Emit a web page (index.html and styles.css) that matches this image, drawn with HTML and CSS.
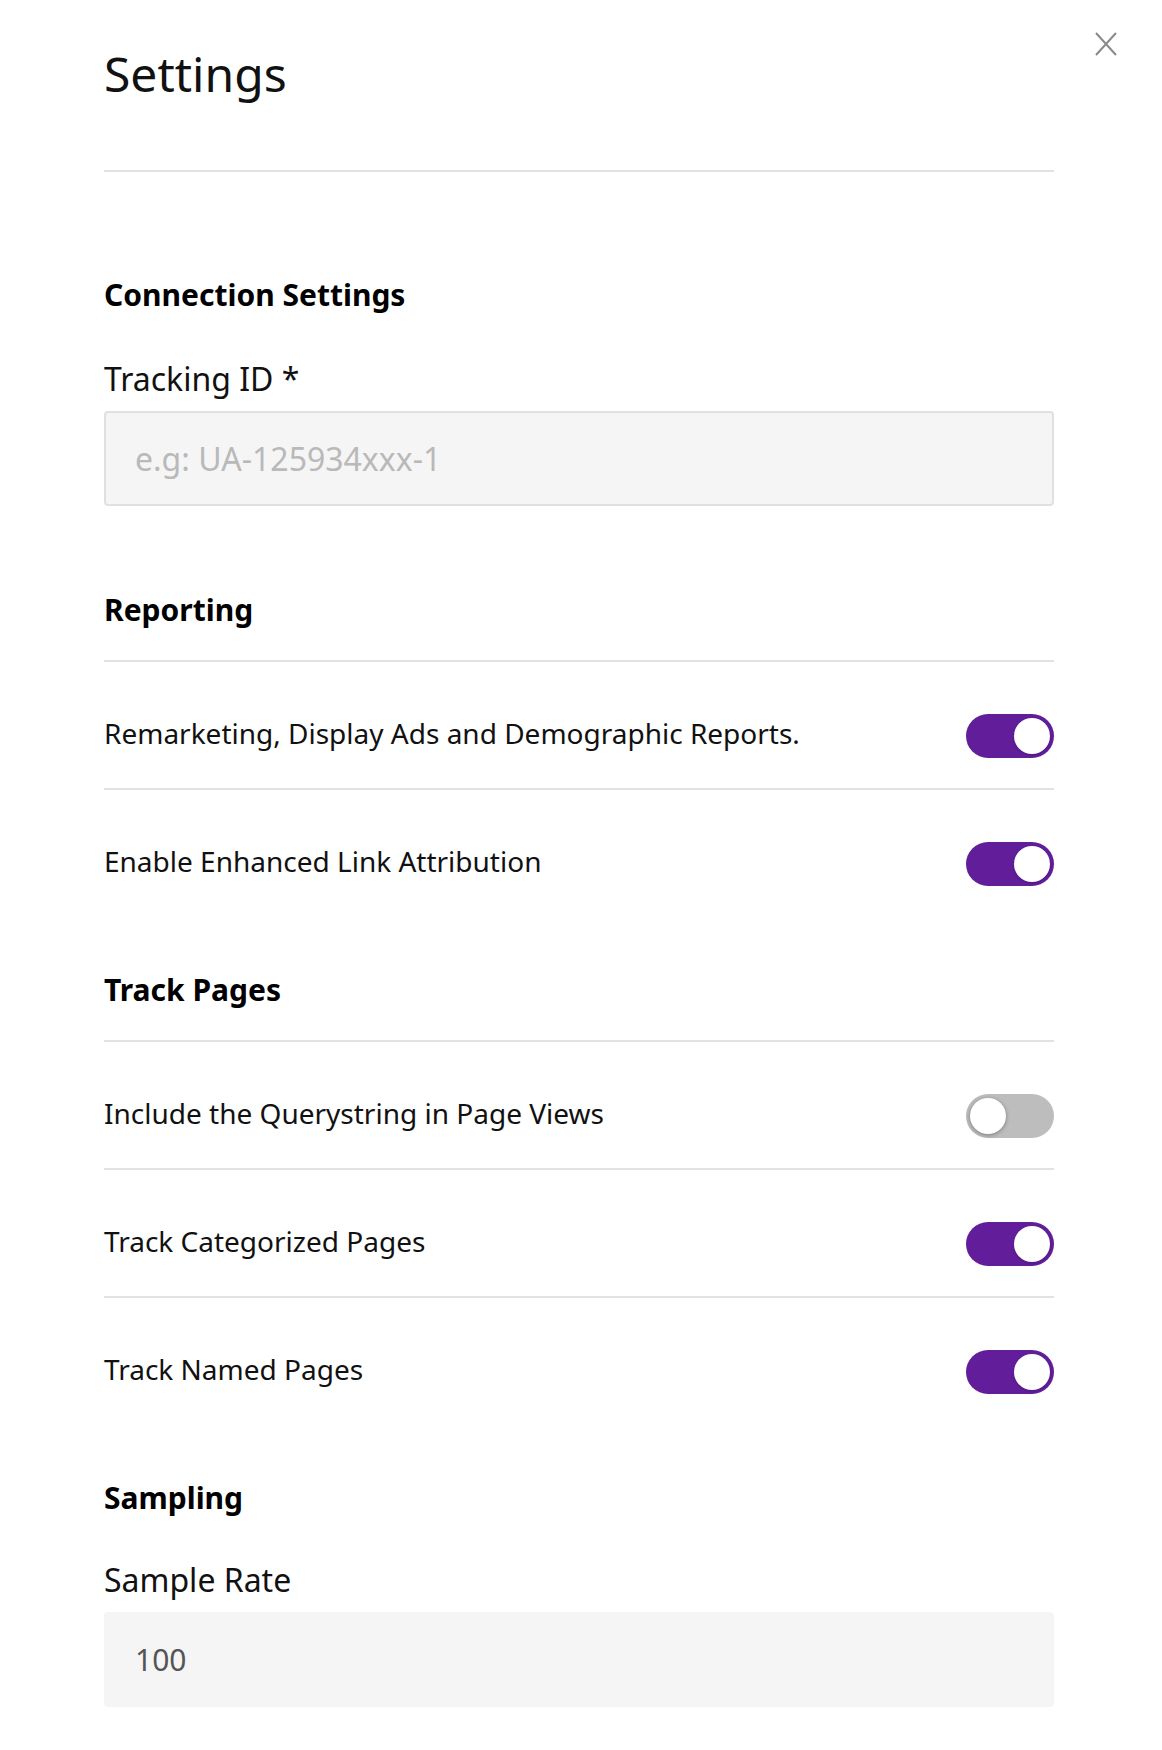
FILE: index.html
```html
<!DOCTYPE html>
<html lang="en">
<head>
<meta charset="utf-8">
<title>Settings</title>
<link rel="stylesheet" href="styles.css">
</head>
<body>
<div class="panel">
  <button class="close" aria-label="Close">
    <svg width="24" height="24" viewBox="0 0 24 24"><path d="M2 1 L22 23 M22 1 L2 23" stroke="#8a8a8a" stroke-width="2" fill="none"/></svg>
  </button>
  <header class="header">
    <h1 class="title">Settings</h1>
  </header>

  <section class="section section-first">
    <h2 class="section-title">Connection Settings</h2>
    <label class="field-label first-label" for="tid">Tracking ID *</label>
    <input class="text-input bordered" id="tid" type="text" placeholder="e.g: UA-125934xxx-1">
  </section>

  <section class="section section-after-field">
    <h2 class="section-title with-rule">Reporting</h2>
    <div class="row">
      <span class="row-text">Remarketing, Display Ads and Demographic Reports.</span>
      <span class="toggle on"><span class="knob"></span></span>
    </div>
    <div class="row">
      <span class="row-text">Enable Enhanced Link Attribution</span>
      <span class="toggle on"><span class="knob"></span></span>
    </div>
  </section>

  <section class="section">
    <h2 class="section-title with-rule">Track Pages</h2>
    <div class="row">
      <span class="row-text">Include the Querystring in Page Views</span>
      <span class="toggle"><span class="knob"></span></span>
    </div>
    <div class="row">
      <span class="row-text">Track Categorized Pages</span>
      <span class="toggle on"><span class="knob"></span></span>
    </div>
    <div class="row">
      <span class="row-text">Track Named Pages</span>
      <span class="toggle on"><span class="knob"></span></span>
    </div>
  </section>

  <section class="section">
    <h2 class="section-title">Sampling</h2>
    <label class="field-label" for="rate">Sample Rate</label>
    <input class="text-input plain" id="rate" type="text" value="100">
  </section>
</div>
</body>
</html>
```

FILE: styles.css
```css
* { box-sizing: border-box; }
html, body { margin: 0; padding: 0; background: #fff; }
body {
  font-family: "Noto Sans", "Open Sans", sans-serif;
  color: #111;
}
.panel {
  position: relative;
  width: 1162px;
  padding: 0 108px 40px 104px;
}
.close {
  position: absolute;
  top: 32px;
  right: 44px;
  width: 24px;
  height: 24px;
  padding: 0;
  border: 0;
  background: none;
  cursor: pointer;
}
.close svg { display: block; }
.header {
  padding: 42px 0 64px;
  border-bottom: 2px solid #e2e2e2;
}
.title {
  margin: 0;
  font-size: 48px;
  line-height: 64px;
  font-weight: 400;
  color: #111;
}
.section { margin-top: 54px; }
.section-first { margin-top: 103px; }
.section-after-field { margin-top: 84px; }
.section-title {
  margin: 0 0 42px;
  font-size: 30px;
  line-height: 40px;
  font-weight: 700;
  color: #000;
}
.section-title.with-rule { margin-bottom: 30px; }
.field-label {
  display: block;
  font-size: 32px;
  line-height: 40px;
  color: #111;
  margin-bottom: 14px;
}
.first-label {
  padding-top: 2px;
  margin-bottom: 12px;
}
.text-input {
  display: block;
  width: 100%;
  height: 95px;
  padding: 0 29px;
  font-family: "Noto Sans", "Open Sans", sans-serif;
  font-size: 32px;
  color: #555;
  background: #f5f5f5;
  border-radius: 4px;
  outline: none;
}
.text-input::placeholder { color: #b9b9b9; }
.bordered { border: 2px solid #e0e0e0; }
.plain {
  border: 0;
  padding-left: 31px;
  margin-top: -2px;
  font-size: 30px;
}
.row {
  display: flex;
  align-items: flex-start;
  justify-content: space-between;
  border-top: 2px solid #e2e2e2;
  padding: 52px 0 30px;
}
.row-text {
  font-size: 28px;
  line-height: 38px;
  color: #111;
}
.toggle {
  position: relative;
  flex: none;
  width: 88px;
  height: 44px;
  border-radius: 22px;
  background: #bdbdbd;
}
.toggle .knob {
  position: absolute;
  top: 4px;
  left: 4px;
  width: 36px;
  height: 36px;
  border-radius: 50%;
  background: #fff;
  box-shadow: 0 1px 4px rgba(0,0,0,0.35);
}
.toggle.on { background: #621e9a; }
.toggle.on .knob {
  left: 48px;
  box-shadow: 0 1px 3px rgba(0,0,0,0.2);
}
```
